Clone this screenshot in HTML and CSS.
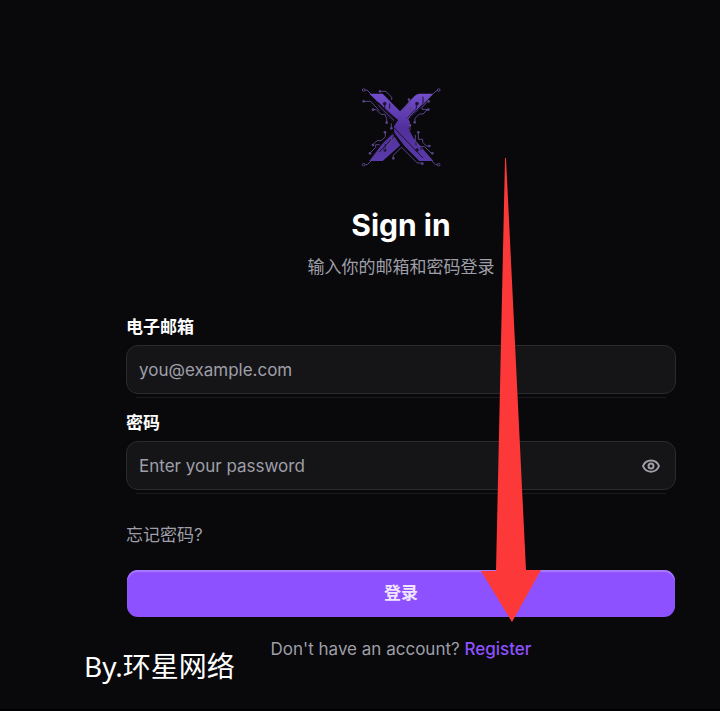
FILE: index.html
```html
<!DOCTYPE html>
<html lang="zh-CN">
<head>
<meta charset="utf-8">
<meta name="viewport" content="width=device-width, initial-scale=1">
<title>Sign in</title>
<link rel="stylesheet" href="styles.css">
</head>
<body>
<main class="page">
  <header class="intro">
    <svg class="logo" viewBox="30 24 246 246" role="img" aria-label="X">
      <defs>
        <linearGradient id="tone" gradientUnits="userSpaceOnUse" x1="0" y1="40" x2="0" y2="260">
          <stop offset="0" stop-color="#7650d0"/>
          <stop offset=".5" stop-color="#51309c"/>
          <stop offset="1" stop-color="#5b3bac"/>
        </linearGradient>
      </defs>
      <g fill="url(#tone)">
        <path d="M58 47H98L162 112L180 134L173 154L149 130L126 111L108 96Z"/>
        <path d="M250 47H207Q198 48 190 58L148 102L164 121L172 126L202 98Z"/>
        <path d="M132 145L145 139L195 185L250 249H208L164 205L134 166Z"/>
        <path d="M58 249H98L151 202L128 168L99 195Z"/>
      </g>
      <path fill="url(#tone)" d="M148 121L166 107L180 132L176 152L190 180L170 190L132 160V145Z"/>
      <g class="logo-gaps">
        <path d="M75 72L132 136M86 73L140 132M104 74V91L130 116M119 76V92M129 146L219 240M198 185V202M213 200V216"/>
        <path d="M199 72V91L171 119M219 56V78L180 117M227 70L184 114M132 160L77 216M137 170L88 222M106 198V212"/>
        <circle cx="104" cy="77" r="4"/><circle cx="201" cy="77" r="4"/><circle cx="104" cy="216" r="4"/><circle cx="201" cy="216" r="4"/>
      </g>
      <g class="logo-traces">
        <path d="M45 36H51L63 48M92 40H108L125 58V66M45 70H62L88 98M70 95H79L93 109H105L110 122V132M85 81L132 128"/>
        <path d="M263 36L250 46L219 79M177 67V77L158 97M234 70L216 88V94H224L233 95M231 96L219 108H208L195 121V130M181 91V107L170 118"/>
        <path d="M45 260H52L64 248L78 233M60 225L77 208V200H89M69 200L81 188H94L106 176V165M91 226L137 180M125 176V188L113 200M124 151V136M130 240V232L154 208"/>
        <path d="M263 260H257L246 250L226 230M215 255H202L154 207M244 226L224 206H211L196 191V171M236 204H229L218 193V184H205V164M180 142V157"/>
        <circle cx="41" cy="36" r="4"/><circle cx="266" cy="36" r="4"/><circle cx="41" cy="260" r="4"/><circle cx="266" cy="260" r="4"/>
      </g>
      <g class="logo-dots">
        <circle cx="90" cy="40" r="4"/><circle cx="41" cy="70" r="4"/><circle cx="69" cy="95" r="4"/><circle cx="110" cy="134" r="4"/><circle cx="177" cy="65" r="4"/><circle cx="236" cy="70" r="4"/><circle cx="235" cy="95" r="4"/><circle cx="194" cy="133" r="4"/><circle cx="124" cy="151" r="4"/><circle cx="105" cy="163" r="4"/><circle cx="69" cy="201" r="4"/><circle cx="60" cy="226" r="4"/><circle cx="130" cy="241" r="4"/><circle cx="217" cy="257" r="4"/><circle cx="247" cy="226" r="4"/><circle cx="238" cy="204" r="4"/><circle cx="205" cy="163" r="4"/><circle cx="180" cy="142" r="4"/><circle cx="181" cy="90" r="4"/>
      </g>
    </svg>
    <h1 class="title">Sign in</h1>
    <p class="subtitle">输入你的邮箱和密码登录</p>
  </header>
  <form class="form">
    <div class="field">
      <label class="label" for="email">电子邮箱</label>
      <div class="control"><input class="input" id="email" type="email" placeholder="you@example.com"></div>
    </div>
    <div class="field">
      <label class="label" for="password">密码</label>
      <div class="control">
        <input class="input" id="password" type="password" placeholder="Enter your password">
        <button class="reveal" type="button" aria-label="显示密码">
          <svg class="eye" viewBox="0 0 18 18" aria-hidden="true"><path d="M1 9C4 1.500 14 1.500 17 9C14 16.500 4 16.500 1 9Z"/><circle cx="9" cy="9" r="2.500"/></svg>
        </button>
      </div>
    </div>
    <a class="forgot" href="#">忘记密码?</a>
    <button class="submit" type="submit">登录</button>
  </form>
  <p class="signup">Don't have an account? <a class="register" href="#">Register</a></p>
</main>
<svg class="arrow" viewBox="0 0 60 464" aria-hidden="true"><path d="M24 0H25L45 412H60L31 464L0 413H15Z"/></svg>
<p class="credit">By.环星网络</p>
</body>
</html>
```
FILE: styles.css
```css
* {
  box-sizing: border-box;
}

body {
  position: relative;
  margin: 0;
  min-height: 100vh;
  background: #09090b;
  color: #9f9fa9;
  font: 17px/24px Inter, "Noto Sans CJK SC", sans-serif;
  border-bottom: 2px solid #000;
}

h1,
p {
  margin: 0;
}

a {
  color: inherit;
  text-decoration: none;
}

.page {
  padding: 86px 44px 48px 126px;
}

.intro {
  display: flex;
  flex-direction: column;
  align-items: center;
  text-align: center;
}

.logo {
  width: 82px;
  height: 82px;
}

.logo-gaps {
  fill: #1c132e;
  stroke: #1c132e;
  stroke-width: 3;
}

.logo-gaps path {
  fill: none;
}

.logo-traces {
  fill: none;
  stroke: #5b4489;
  stroke-width: 3;
}

.logo-dots {
  fill: #5b4489;
}

.title {
  margin-top: 39px;
  color: #fff;
  font-size: 30px;
  line-height: 36px;
  font-weight: 700;
}

.subtitle {
  margin-top: 12px;
}

.form {
  display: flex;
  flex-direction: column;
  gap: 17px;
  margin-top: 36px;
}

.field {
  display: flex;
  flex-direction: column;
  gap: 6px;
}

.label {
  color: #fff;
  font-weight: 600;
}

.control {
  position: relative;
  display: flex;
}

.control::after {
  content: "";
  position: absolute;
  right: 10px;
  bottom: -4px;
  left: 10px;
  height: 1px;
  background: #1b1b1d;
}

.input {
  width: 100%;
  height: 49px;
  padding: 0 12px;
  border: 1px solid #2b2b2e;
  border-radius: 12px;
  background: #151517;
  color: #fff;
  font: inherit;
}

.input::placeholder {
  color: #9f9fa9;
  opacity: 1;
}

.reveal {
  position: absolute;
  top: 0;
  right: 8px;
  bottom: 0;
  display: grid;
  place-items: center;
  width: 34px;
  padding: 0;
  border: 0;
  background: none;
}

.eye {
  width: 18px;
  height: 18px;
  fill: none;
  stroke: #9f9fa9;
  stroke-width: 2;
}

.forgot {
  align-self: flex-start;
  margin-top: 16px;
}

.submit {
  height: 47px;
  margin: 6px 1px 0;
  padding: 0 0 2px;
  border: 0;
  border-radius: 11px;
  background: #8e51ff;
  box-shadow: inset 0 2px 1px #a979ff;
  color: #f0e6ff;
  font: inherit;
  font-weight: 600;
}

.signup {
  margin-top: 20px;
  text-align: center;
}

.register {
  color: #8e51ff;
  font-weight: 500;
}

.arrow {
  position: absolute;
  top: 158px;
  left: 481px;
  width: 60px;
  height: 464px;
  fill: #fc3938;
  pointer-events: none;
}

.credit {
  position: absolute;
  top: 646px;
  left: 84px;
  color: #fff;
  font: 28px/40px "Noto Sans", "Noto Sans CJK SC", sans-serif;
}
```
